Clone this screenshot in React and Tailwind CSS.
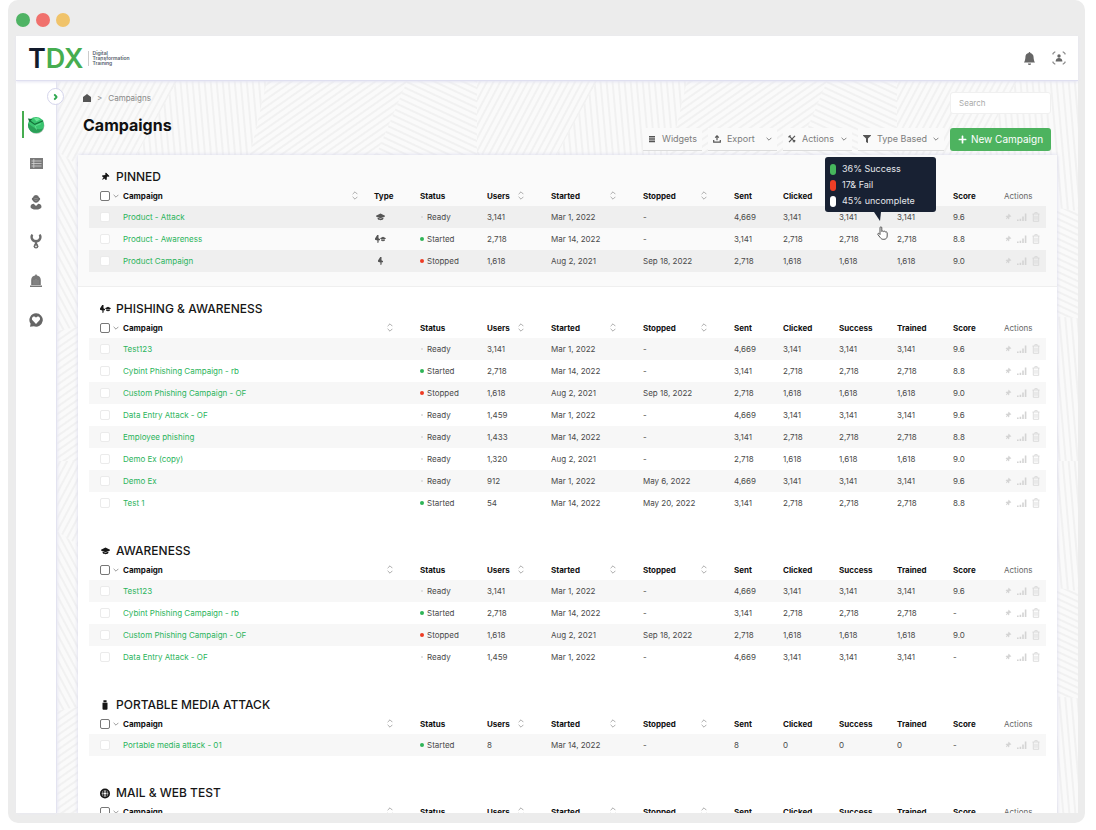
import { useState } from 'react';
import { BsBellFill } from 'react-icons/bs';
import { FaFilter, FaPlus, FaThumbtack } from 'react-icons/fa';

const row = (name, status, users, started, stopped, sent, clicked, rest, score, type) => ({
  name, status, users, started, stopped, sent, clicked, success: rest, trained: rest, score, type
});

const groups = [
  {
    id: 'pinned',
    title: 'PINNED',
    icon: 'pin',
    rows: [
      row('Product - Attack', 'Ready', '3,141', 'Mar 1, 2022', '-', '4,669', '3,141', '3,141', '9.6', 'cap'),
      row('Product - Awareness', 'Started', '2,718', 'Mar 14, 2022', '-', '3,141', '2,718', '2,718', '8.8', 'both'),
      row('Product Campaign', 'Stopped', '1,618', 'Aug 2, 2021', 'Sep 18, 2022', '2,718', '1,618', '1,618', '9.0', 'hook')
    ]
  },
  {
    id: 'phishing',
    title: 'PHISHING & AWARENESS',
    icon: 'both',
    rows: [
      row('Test123', 'Ready', '3,141', 'Mar 1, 2022', '-', '4,669', '3,141', '3,141', '9.6'),
      row('Cybint Phishing Campaign - rb', 'Started', '2,718', 'Mar 14, 2022', '-', '3,141', '2,718', '2,718', '8.8'),
      row('Custom Phishing Campaign - OF', 'Stopped', '1,618', 'Aug 2, 2021', 'Sep 18, 2022', '2,718', '1,618', '1,618', '9.0'),
      row('Data Entry Attack - OF', 'Ready', '1,459', 'Mar 1, 2022', '-', '4,669', '3,141', '3,141', '9.6'),
      row('Employee phishing', 'Ready', '1,433', 'Mar 14, 2022', '-', '3,141', '2,718', '2,718', '8.8'),
      row('Demo Ex (copy)', 'Ready', '1,320', 'Aug 2, 2021', '-', '2,718', '1,618', '1,618', '9.0'),
      row('Demo Ex', 'Ready', '912', 'Mar 1, 2022', 'May 6, 2022', '4,669', '3,141', '3,141', '9.6'),
      row('Test 1', 'Started', '54', 'Mar 14, 2022', 'May 20, 2022', '3,141', '2,718', '2,718', '8.8')
    ]
  },
  {
    id: 'awareness',
    title: 'AWARENESS',
    icon: 'cap',
    rows: [
      row('Test123', 'Ready', '3,141', 'Mar 1, 2022', '-', '4,669', '3,141', '3,141', '9.6'),
      row('Cybint Phishing Campaign - rb', 'Started', '2,718', 'Mar 14, 2022', '-', '3,141', '2,718', '2,718', '-'),
      row('Custom Phishing Campaign - OF', 'Stopped', '1,618', 'Aug 2, 2021', 'Sep 18, 2022', '2,718', '1,618', '1,618', '9.0'),
      row('Data Entry Attack - OF', 'Ready', '1,459', 'Mar 1, 2022', '-', '4,669', '3,141', '3,141', '-')
    ]
  },
  {
    id: 'media',
    title: 'PORTABLE MEDIA ATTACK',
    icon: 'usb',
    rows: [row('Portable media attack - 01', 'Started', '8', 'Mar 14, 2022', '-', '8', '0', '0', '-')]
  },
  { id: 'mail', title: 'MAIL & WEB TEST', icon: 'globe', rows: [] }
];

const dotColors = {
  Ready: 'bg-[#d9d9d9] size-[2px] mx-px',
  Started: 'bg-[#2fb457] size-1',
  Stopped: 'bg-[#ee3b24] size-1'
};

// ---- Icons ----
const HookIcon = ({ className }) => (
  <svg className={className} viewBox="0 0 5 8" fill="currentColor">
    <path d="M2.2 0h1.300v3.200l1.500.8v1.200H3.600V7.400L2.400 8V5.400L0 4.800V3.600z" />
  </svg>
);

const CapIcon = ({ className }) => (
  <svg className={className} viewBox="0 0 9 8" fill="currentColor">
    <path d="M4.500 0.600L9 2.800v.6L4.500 5.200 0 3.400v-.6z" />
    <path d="M1.600 4.500l2.900 1.200 2.900-1.200v1.600C6 7.700 3 7.700 1.600 6.100z" />
  </svg>
);

const UsbIcon = ({ className }) => (
  <svg className={className} viewBox="0 0 16 16" fill="currentColor">
    <path d="M5.5 0.5h5v3h-5zM4 4.5h8V14a1.5 1.5 0 0 1-1.5 1.5h-5A1.5 1.5 0 0 1 4 14z" />
  </svg>
);

const WebIcon = ({ className }) => (
  <svg className={className} viewBox="0 0 16 16" fill="none" stroke="currentColor" strokeWidth="1.4">
    <circle cx="8" cy="8" r="6.6" strokeWidth="2.8" />
    <ellipse cx="8" cy="8" rx="3" ry="6.5" />
    <path d="M1.5 5.6h13M1.5 10.4h13" />
  </svg>
);

const GroupIcon = ({ name }) => {
  if (name === 'pin') return <FaThumbtack className="size-2 rotate-45" />;
  if (name === 'cap') return <CapIcon className="w-[9px] h-2" />;
  if (name === 'hook') return <HookIcon className="w-[5px] h-2" />;
  if (name === 'usb') return <UsbIcon className="size-[10px]" />;
  if (name === 'globe') return <WebIcon className="size-[11px]" />;
  return (
    <span className="flex items-center">
      <HookIcon className="w-[5px] h-2" />
      <CapIcon className="w-[6px] h-[6px]" />
    </span>
  );
};

const Chevron = ({ className }) => (
  <svg className={className} viewBox="0 0 10 6" fill="none" stroke="currentColor" strokeWidth="1.6">
    <path d="M1 1l4 4 4-4" />
  </svg>
);

const SortIcon = () => (
  <svg className="w-[6px] h-[9px]" viewBox="0 0 6 9" fill="none" stroke="#a3a3a3" strokeWidth="0.9">
    <path d="M0.6 3.2L3 0.8l2.4 2.4M0.6 5.8L3 8.2l2.4-2.4" />
  </svg>
);

const BarsIcon = () => (
  <svg className="w-[10px] h-2" viewBox="0 0 10 8" fill="currentColor">
    <path d="M0 6.5h1.6V8H0zM2.6 5.800h1.6V8H2.6zM5.2 3.500h1.6V8H5.2zM7.8 0.5h1.6V8H7.8z" />
  </svg>
);

const TrashIcon = () => (
  <svg className="w-2 h-[10px]" viewBox="0 0 8 10" fill="none" stroke="currentColor" strokeWidth="0.8">
    <path d="M0.5 2h7M2.8 1.8V0.6h2.4v1.2M1.3 2v7.3h5.4V2M3 3.8v4M5 3.8v4" />
  </svg>
);

const EarthIcon = () => (
  <svg className="size-[18px]" viewBox="0 0 18 18">
    <circle cx="9.4" cy="9.8" r="8" fill="#a9b8ae" />
    <circle cx="9" cy="9" r="8" fill="#39c46f" />
    <path d="M1.2 7.2A8 8 0 0 0 3 14.2c4 4.3 11 3.2 13.2-2-3 1.6-6.600 1.200-9.200-.6C4.600 10 3 9 1.200 7.200z" fill="#2a9f57" />
    <path d="M2 4.200L7.800 8.400l8.400-3.600" fill="none" stroke="#15713a" strokeWidth="1.200" />
    <path d="M0.800 2.500l4.500 .4-2.600 3z" fill="#15713a" />
    <path d="M7 2.400c2-.8 4.500-.4 6 1L9.500 5.600z" fill="#6be598" />
    <path d="M9 9.500l5-1.800M8 9.500l1.500 4" stroke="#6be598" strokeWidth="0.800" />
  </svg>
);

const ListIcon = () => (
  <svg className="w-[13px] h-[11px]" viewBox="0 0 13 11">
    <path d="M0 0h13v11H0z" fill="#7a7a7a" />
    <path d="M1.500 3h10M1.500 5.500h10M1.500 8h10M3.800 1v9" stroke="#ddd" strokeWidth="0.700" />
  </svg>
);

const UserIcon = () => (
  <svg className="w-3 h-[15px]" viewBox="0 0 12 15" fill="#6b6b6b">
    <path d="M6 0a3 3 0 0 1 3 2.600c1 .3 1.500 1.300.9 2.200L8.300 6.700a3.300 3.300 0 0 1-4.600 0L2.100 4.800c-.6-.9-.1-1.900.9-2.200A3 3 0 0 1 6 0z" />
    <path d="M0.500 12c0-2 1.500-3.200 3.200-3.200L6 11l2.300-2.200c1.700 0 3.200 1.200 3.200 3.200 0 1.500-2.500 2.600-5.500 2.600S.5 13.500.5 12z" />
    <path d="M4.200 3.600h3.600M4.500 5c.8.700 2.200.7 3 0" stroke="#a5a5a5" strokeWidth="0.600" fill="none" />
  </svg>
);

const WrenchIcon = () => (
  <svg className="w-3 h-[15px]" viewBox="0 0 12 15">
    <path d="M2.600 0.800C1 2 1 6.800 6 7.200c5-.4 5-5.200 3.400-6.400M6 7v4" fill="none" stroke="#6b6b6b" strokeWidth="2.400" />
    <circle cx="6" cy="12.200" r="2.400" fill="#6b6b6b" />
    <circle cx="6" cy="12.400" r="0.800" fill="#fff" />
  </svg>
);

const SirenIcon = () => (
  <svg className="w-3 h-[13px]" viewBox="0 0 12 13">
    <path d="M1.200 11V6C1.200 3.300 3 2 5 1.600L6 0l1 1.600c2 .4 3.800 1.700 3.800 4.400v5zM0 11.500h12V13H0z" fill="#777" />
    <path d="M4 10.500V6M6 10.500V5M8 10.500V6" stroke="#999" strokeWidth="0.700" />
  </svg>
);

const ChatHeartIcon = () => (
  <svg className="size-[14px]" viewBox="0 0 14 14">
    <path d="M7 0.300a6.700 6.700 0 1 1-2.200 13L1 13.700l.6-2.900A6.700 6.700 0 0 1 7 .3z" fill="#666" />
    <path d="M7 10.900L3.500 7.300C2.100 5.500 3.600 3.300 5.400 3.500c.8.100 1.300.6 1.600 1.200.3-.6.800-1.100 1.600-1.200 1.800-.2 3.300 2 1.900 3.800z" fill="#fff" />
  </svg>
);

const ScanUserIcon = () => (
  <svg className="size-[14px]" viewBox="0 0 14 14" fill="none" stroke="#8a8a8a" strokeWidth="1.200">
    <path d="M1 3.400V2.600L2.600 1h.8M10.600 1h.8L13 2.600v.8M13 10.600v.8L11.400 13h-.8M3.400 13h-.8L1 11.400v-.8" />
    <circle cx="7" cy="5" r="1.700" fill="#666" stroke="none" />
    <path d="M3.600 10.400c.2-4.400 6.600-4.400 6.800 0z" fill="#666" stroke="none" />
  </svg>
);

const HandCursor = () => (
  <svg className="w-[11px] h-[14px]" viewBox="0 0 11 14" fill="#fff" stroke="#444" strokeWidth="0.900" strokeLinejoin="round">
    <path d="M3 8.500V1.800c0-1.300 1.800-1.300 1.800 0V5.500c.3-.8 1.700-.8 1.900.1.500-.7 1.700-.4 1.800.5.700-.5 1.700-.1 1.700.9v3c0 2-1.300 3.300-3.200 3.300H6.200c-1.500 0-2.300-.8-3-1.800L.9 8.600C.4 7.500 1.600 6.900 2.300 7.700z" />
  </svg>
);

const ToolIcon = ({ name }) => {
  if (name === 'filter') return <FaFilter className="size-2 text-[#555]" />;
  return (
    <svg className="size-2" viewBox="0 0 8 8" fill="none" stroke="#555" strokeWidth="1.200">
      {name === 'widgets' && <path d="M1 1.500h6M1 3.200h6M1 4.900h6M1 6.600h6" />}
      {name === 'export' && <path d="M4 5.200V1M2.200 2.600L4 .8l1.800 1.800M0.700 5v2.200h6.600V5" />}
      {name === 'actions' && <path d="M1 0.800l6 6.400M7 .8L1 7.200M.5 2.200L2.600.6M4.800 7l2.400-1.800" />}
    </svg>
  );
};

// Hatched background, every facet is filled with lines of another direction
const Backdrop = () => {
  const angles = [25, -35, 62, -12, 85, -62, 40];
  const facets = [
    ['0,0 120,0 60,110 0,70', 5],
    ['120,0 210,0 180,130 60,110', 4],
    ['210,0 350,0 300,120 180,130', 1],
    ['350,0 420,0 420,90 300,120', 0],
    ['0,70 60,110 100,230 0,250', 2],
    ['60,110 180,130 210,240 100,230', 0],
    ['180,130 300,120 320,250 210,240', 5],
    ['300,120 420,90 420,250 320,250', 6],
    ['0,250 100,230 150,380 0,380', 1],
    ['100,230 210,240 260,380 150,380', 4],
    ['210,240 320,250 420,250 420,380 260,380', 3]
  ];
  return (
    <svg className="absolute inset-0 size-full" aria-hidden="true">
      <defs>
        {angles.map((angle, i) => (
          <pattern key={angle} id={`hatch-${i}`} width="6" height="6" patternUnits="userSpaceOnUse" patternTransform={`rotate(${angle})`}>
            <path d="M0 3h6" stroke="#f1f1f1" strokeWidth="2" />
          </pattern>
        ))}
        <pattern id="facets" width="420" height="380" patternUnits="userSpaceOnUse">
          {facets.map(([points, i]) => (
            <polygon key={points} points={points} fill={`url(#hatch-${i})`} />
          ))}
        </pattern>
      </defs>
      <rect width="100%" height="100%" fill="url(#facets)" />
    </svg>
  );
};

// ---- Page parts ----
const TopBar = () => (
  <header className="relative z-20 flex h-[45px] shrink-0 items-center justify-between border-b border-[#dfdff0] bg-white px-3 shadow-[0_1px_3px_#e4e4f2]">
    <a href="#home" className="flex items-center gap-1" aria-label="TDX home">
      <span className="text-[27px] leading-none font-semibold text-[#121a2c]">
        T<span className="text-[#46ad50]">DX</span>
      </span>
      <span className="flex flex-col border-l border-[#ccc] pl-1 text-[5px] leading-[5px] font-semibold text-[#555c6b]">
        <span>Digital</span>
        <span>Transformation</span>
        <span>Training</span>
      </span>
    </a>
    <div className="flex items-center gap-4">
      <button type="button" aria-label="Notifications">
        <BsBellFill className="size-[13px] text-[#666]" />
      </button>
      <button type="button" aria-label="Account">
        <ScanUserIcon />
      </button>
    </div>
  </header>
);

const navItems = [
  { label: 'Campaigns', Icon: EarthIcon, active: true },
  { label: 'Reports', Icon: ListIcon },
  { label: 'Users', Icon: UserIcon },
  { label: 'Settings', Icon: WrenchIcon },
  { label: 'Alerts', Icon: SirenIcon },
  { label: 'Support', Icon: ChatHeartIcon }
];

const Sidebar = () => (
  <nav className="relative z-10 w-[41px] shrink-0 border-r border-[#e3e3f0] bg-white pt-6 shadow-[1px_0_3px_#e8e8f4]">
    <button
      type="button"
      aria-label="Expand menu"
      className="absolute top-[7px] -right-2 flex size-[17px] items-center justify-center rounded-full border border-[#d5d5ec] bg-white text-[#2fa84f]"
    >
      <Chevron className="w-[7px] h-1 -rotate-90 stroke-3" />
    </button>
    {navItems.map(({ label, Icon, active }) => (
      <a key={label} href={`#${label.toLowerCase()}`} aria-label={label} className="relative flex h-[39px] items-center justify-center">
        {active && <span className="absolute left-[6px] h-[27px] w-[2px] bg-[#46ad50]"></span>}
        <Icon />
      </a>
    ))}
  </nav>
);

const ToolButton = ({ icon, label, menu }) => (
  <button
    type="button"
    className={`flex h-[23px] items-center gap-[6px] border-b border-[#dcdcdc] bg-[#fafafa] px-[5px] text-[9px] text-[#7d7d7d] ${menu ? 'min-w-[69px]' : ''}`}
  >
    <ToolIcon name={icon} />
    {label}
    {menu && <Chevron className="ml-auto w-[6px] h-1" />}
  </button>
);

const Tooltip = () => (
  <div className="absolute bottom-4 -left-[14px] z-20 h-[55px] w-[111px] rounded-[3px] bg-[#182133] px-[5px] py-1 text-[9px] leading-4 text-gray-200">
    <div className="flex items-center gap-[6px]"><span className="h-[11px] w-[6px] rounded-sm bg-[#46b65c]"></span>36% Success</div>
    <div className="flex items-center gap-[6px]"><span className="h-[11px] w-[6px] rounded-sm bg-[#ee3e26]"></span>17& Fail</div>
    <div className="flex items-center gap-[6px]"><span className="h-[11px] w-[6px] rounded-sm bg-white"></span>45% uncomplete</div>
    <svg className="absolute top-full left-[49px] w-[7px] h-[9px]" viewBox="0 0 7 9">
      <path d="M0 0h7L6 9z" fill="#182133" />
    </svg>
    <span className="absolute top-[69px] left-[52px]"><HandCursor /></span>
  </div>
);

const CampaignTable = ({ group, selected, onToggle, onToggleAll }) => {
  const pinned = group.id === 'pinned';
  const allSelected = group.rows.length > 0 && group.rows.every(r => selected.includes(`${group.id}/${r.name}`));

  const sortable = (label) => (
    <div className="flex items-center justify-between pr-[27px]">
      {label}
      <SortIcon />
    </div>
  );

  return (
    <section className={pinned ? 'border-b border-[#efefef] bg-[#fafafa] px-[11px] pt-[14px] pb-[14px]' : 'px-[11px] pt-[14px] pb-[15px]'}>
      <h2 className="flex h-4 items-center gap-[6px] pl-[11px] text-[12px] font-medium text-[#161616]">
        <span className="flex w-[10px] items-center justify-center"><GroupIcon name={group.icon} /></span>
        {group.title}
      </h2>
      <table className="w-full table-fixed text-left text-[8px] leading-[10px] whitespace-nowrap text-[#4a4a4a]">
        <colgroup>
          <col className="w-[34px]" />
          <col />
          {pinned && <col className="w-[46px]" />}
          <col className="w-[67px]" />
          <col className="w-[64px]" />
          <col className="w-[92px]" />
          <col className="w-[91px]" />
          <col className="w-[49px]" />
          <col className="w-[56px]" />
          <col className="w-[58px]" />
          <col className="w-[56px]" />
          <col className="w-[51px]" />
          <col className="w-[42px]" />
        </colgroup>
        <thead className="text-[#111]">
          <tr className="h-[21px]">
            <th className="p-0 pl-[11px]">
              <div className="flex items-center gap-[3px]">
                <input
                  type="checkbox"
                  aria-label={`Select all in ${group.title}`}
                  checked={allSelected}
                  onChange={() => onToggleAll(group)}
                  className="size-[10px] appearance-none rounded-[2px] border border-[#777] bg-white checked:bg-[#46ad50]"
                />
                <Chevron className="w-[6px] h-1 text-[#999]" />
              </div>
            </th>
            <th className="p-0">
              {pinned ? <div className="flex items-center justify-between pr-4">Campaign<SortIcon /></div> : sortable('Campaign')}
            </th>
            {pinned && <th className="p-0">Type</th>}
            <th className="p-0">Status</th>
            <th className="p-0">{sortable('Users')}</th>
            <th className="p-0">{sortable('Started')}</th>
            <th className="p-0">{sortable('Stopped')}</th>
            <th className="p-0">Sent</th>
            <th className="p-0">Clicked</th>
            <th className="p-0">Success</th>
            <th className="p-0">Trained</th>
            <th className="p-0">Score</th>
            <th className="p-0 font-normal text-[#666]">Actions</th>
          </tr>
        </thead>
        <tbody>
          {group.rows.map((r, i) => (
            <tr key={r.name} className={pinned ? 'h-[22px] odd:bg-[#efefef]' : 'h-[22px] odd:bg-[#f7f7f7]'}>
              <td className="p-0 pl-[11px]">
                <input
                  type="checkbox"
                  aria-label={`Select ${r.name}`}
                  checked={selected.includes(`${group.id}/${r.name}`)}
                  onChange={() => onToggle(`${group.id}/${r.name}`)}
                  className="block size-[10px] appearance-none rounded-[2px] border border-[#ebebeb] bg-white checked:bg-[#46ad50]"
                />
              </td>
              <td className="p-0"><a href="#campaign" className="text-[#2bb45c]">{r.name}</a></td>
              {pinned && (
                <td className="p-0 text-[#555]">
                  <span className="flex w-3 justify-center"><GroupIcon name={r.type} /></span>
                </td>
              )}
              <td className="p-0">
                <div className="flex items-center gap-[3px]">
                  <span className={`rounded-full ${dotColors[r.status]}`}></span>
                  {r.status}
                </div>
              </td>
              <td className="p-0">{r.users}</td>
              <td className="p-0">{r.started}</td>
              <td className="p-0">{r.stopped}</td>
              <td className="p-0">{r.sent}</td>
              <td className="p-0">{r.clicked}</td>
              <td className="relative p-0">
                {r.success}
                {pinned && i === 0 && <Tooltip />}
              </td>
              <td className="p-0">{r.trained}</td>
              <td className="p-0">{r.score}</td>
              <td className="p-0">
                <div className="flex items-center gap-[5px] text-[#d4d4d4]">
                  <button type="button" aria-label="Pin"><FaThumbtack className="w-2 h-[6px] rotate-45" /></button>
                  <button type="button" aria-label="Statistics"><BarsIcon /></button>
                  <button type="button" aria-label="Delete"><TrashIcon /></button>
                </div>
              </td>
            </tr>
          ))}
        </tbody>
      </table>
    </section>
  );
};

const App = () => {
  const [search, setSearch] = useState('');
  const [selected, setSelected] = useState([]);

  const handleToggle = (key) => {
    setSelected(selected.includes(key) ? selected.filter(k => k !== key) : [...selected, key]);
  };

  const handleToggleAll = (group) => {
    const keys = group.rows.map(r => `${group.id}/${r.name}`);
    const others = selected.filter(k => !keys.includes(k));
    setSelected(keys.every(k => selected.includes(k)) ? others : [...others, ...keys]);
  };

  return (
    <div className="h-screen bg-white pr-[11px] pb-[7px] pl-2 font-['Inter','Open_Sans',sans-serif]">
      <div className="flex h-full flex-col overflow-hidden rounded-[10px] bg-[#ececec] pr-[7px] pb-[10px] pl-2">
        <div className="flex h-9 shrink-0 items-center gap-[6px] pt-1">
          <span className="size-[14px] rounded-full bg-[#4fb364]"></span>
          <span className="size-[14px] rounded-full bg-[#f0716d]"></span>
          <span className="size-[14px] rounded-full bg-[#f0c36a]"></span>
        </div>

        <TopBar />

        <div className="flex min-h-0 flex-1">
          <Sidebar />

          <main className="relative min-w-0 flex-1 overflow-hidden bg-[#fafafa] px-[21px] pt-[11px]">
            <Backdrop />
            <div className="relative mb-1 flex items-start justify-between pr-[6px] pl-[5px]">
              <div>
                <div className="flex h-[11px] items-center gap-[6px] text-[8px] text-[#888]">
                  <a href="#home" aria-label="Home">
                    <svg className="size-2" viewBox="0 0 8 8" fill="#555">
                      <path d="M4 0l4 3v5H0V3z" />
                    </svg>
                  </a>
                  <span>&gt;</span>
                  <a href="#campaigns">Campaigns</a>
                </div>
                <h1 className="mt-3 text-[16px] leading-5 font-bold text-[#111]">Campaigns</h1>
              </div>

              <div className="flex flex-col items-end gap-[14px]">
                <input
                  type="text"
                  aria-label="Search"
                  placeholder="Search"
                  value={search}
                  onChange={(e) => setSearch(e.target.value)}
                  className="h-[22px] w-[101px] rounded-[3px] border border-[#f0f0f0] bg-white px-2 text-[8px] text-[#555] placeholder:text-[#aaa]"
                />
                <div className="flex gap-[6px]">
                  <ToolButton icon="widgets" label="Widgets" />
                  <ToolButton icon="export" label="Export" menu />
                  <ToolButton icon="actions" label="Actions" menu />
                  <ToolButton icon="filter" label="Type Based" menu />
                  <button type="button" className="flex h-[23px] w-[101px] items-center justify-center gap-1 rounded-[3px] bg-[#4db35f] text-[10px] text-white">
                    <FaPlus className="size-[9px]" />
                    New Campaign
                  </button>
                </div>
              </div>
            </div>

            <div className="relative bg-white shadow-[0_0_4px_#d8d8ec]">
              {groups.map(group => (
                <CampaignTable
                  key={group.id}
                  group={group}
                  selected={selected}
                  onToggle={handleToggle}
                  onToggleAll={handleToggleAll}
                />
              ))}
            </div>
          </main>
        </div>
      </div>
    </div>
  );
};

export default App;
